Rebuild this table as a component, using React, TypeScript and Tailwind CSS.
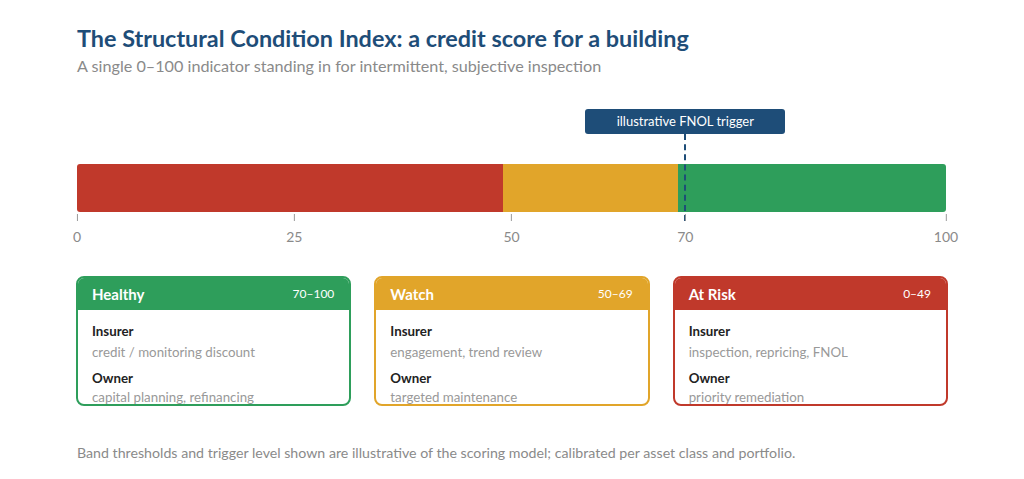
const bands = [
  {
    name: "Healthy",
    range: "70–100",
    border: "border-[#2e9e5b]",
    head: "bg-[#2e9e5b]",
    insurer: "credit / monitoring discount",
    owner: "capital planning, refinancing",
  },
  {
    name: "Watch",
    range: "50–69",
    border: "border-[#e1a52a]",
    head: "bg-[#e1a52a]",
    insurer: "engagement, trend review",
    owner: "targeted maintenance",
  },
  {
    name: "At Risk",
    range: "0–49",
    border: "border-[#c0392b]",
    head: "bg-[#c0392b]",
    insurer: "inspection, repricing, FNOL",
    owner: "priority remediation",
  },
];

const ticks = [0, 25, 50, 70, 100];

export default function App() {
  return (
    <div className="w-[1024px] h-[479px] bg-white font-['Lato','Noto_Sans',sans-serif] overflow-hidden">
      <div className="pl-[77px] pr-[76px] pt-[22px]">
        <h1 className="text-[23.4px] leading-[32px] font-bold text-[#1e4d78]">
          The Structural Condition Index: a credit score for a building
        </h1>
        <p className="text-[16.2px] leading-[22px] text-[#8a8a8a] mt-[1px]">
          A single 0–100 indicator standing in for intermittent, subjective inspection
        </p>

        {/* scale */}
        <div className="relative mt-[32px] w-[869px] h-[140px]">
          {/* trigger label */}
          <div className="absolute left-[70%] top-0 -translate-x-1/2 w-[200px] h-[25px] rounded-[3px] bg-[#1e4d78] text-white text-[13px] leading-[25px] text-center">
            illustrative FNOL trigger
          </div>

          <div className="absolute left-0 right-0 top-[55px] h-[48px] flex rounded-[3px] overflow-hidden">
            <div className="w-[49%] bg-[#c0392b]" />
            <div className="w-[20.2%] bg-[#e1a52a]" />
            <div className="flex-1 bg-[#2e9e5b]" />
          </div>

          {/* dashed trigger line */}
          <div className="absolute left-[70%] top-[25px] h-[87px] -translate-x-1/2 border-l-2 border-dashed border-[#1e4d78]" />

          {ticks.map((t) => (
            <div
              key={t}
              className="absolute top-[105px] -translate-x-1/2 flex flex-col items-center"
              style={{ left: `${t}%` }}
            >
              <div className="w-px h-[7px] bg-[#9a9a9a]" />
              <span className="mt-[7px] text-[14px] leading-[18px] text-[#8a8a8a]">{t}</span>
            </div>
          ))}
        </div>

        {/* band cards */}
        <div className="mt-[27px] w-[872px] -ml-px grid grid-cols-3 gap-[23px]">
          {bands.map((b) => (
            <div
              key={b.name}
              className={`h-[130px] rounded-[8px] border-2 ${b.border} overflow-hidden bg-white`}
            >
              <div className={`${b.head} h-[32px] pl-[14px] pr-[15px] flex items-center justify-between text-white`}>
                <span className="text-[15px] font-bold">{b.name}</span>
                <span className="text-[12px]">{b.range}</span>
              </div>
              <div className="px-[14px] pt-[12px]">
                <div className="text-[13.3px] leading-[18px] font-bold text-[#222]">Insurer</div>
                <div className="mt-[3px] text-[13.3px] leading-[18px] text-[#999]">{b.insurer}</div>
                <div className="mt-[8px] text-[13.3px] leading-[18px] font-bold text-[#222]">Owner</div>
                <div className="mt-[1px] text-[13.3px] leading-[18px] text-[#999]">{b.owner}</div>
              </div>
            </div>
          ))}
        </div>

        <p className="mt-[37px] text-[14.2px] leading-[20px] text-[#8a8a8a]">
          Band thresholds and trigger level shown are illustrative of the scoring model; calibrated per asset class and portfolio.
        </p>
      </div>
    </div>
  );
}
